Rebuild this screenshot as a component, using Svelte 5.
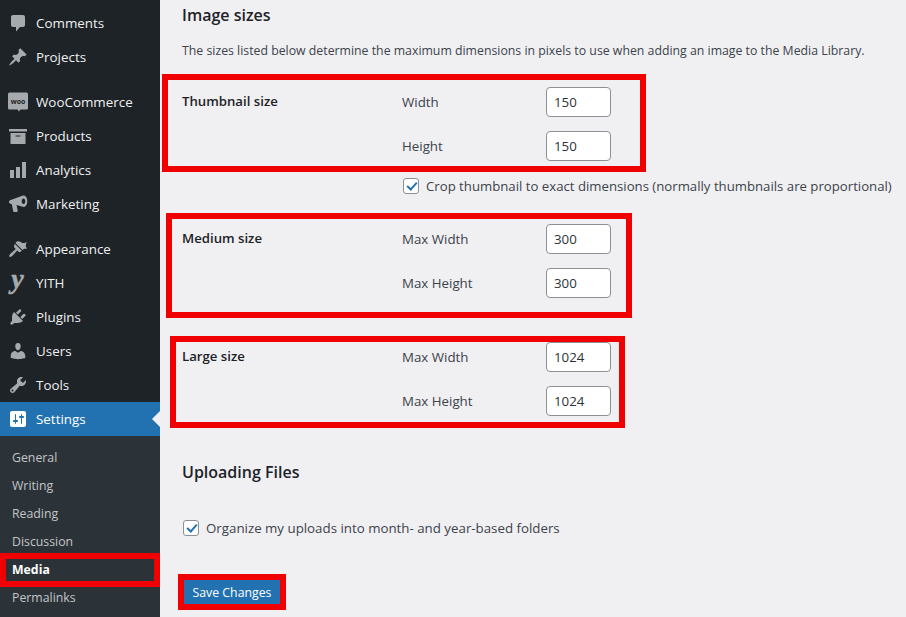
<script>
  const mainMenu = [
    { label: 'Comments', icon: 'comments', gap: false },
    { label: 'Projects', icon: 'pin', gap: false },
    { label: 'WooCommerce', icon: 'woo', gap: true },
    { label: 'Products', icon: 'archive', gap: false },
    { label: 'Analytics', icon: 'chart', gap: false },
    { label: 'Marketing', icon: 'megaphone', gap: false },
    { label: 'Appearance', icon: 'brush', gap: true },
    { label: 'YITH', icon: 'yith', gap: false },
    { label: 'Plugins', icon: 'plugin', gap: false },
    { label: 'Users', icon: 'user', gap: false },
    { label: 'Tools', icon: 'wrench', gap: false },
  ];
  const subMenu = ['General', 'Writing', 'Reading', 'Discussion', 'Media', 'Permalinks'];
  const sizeGroups = [
    { id: 'thumb', title: 'Thumbnail size', w: 'Width', h: 'Height', value: 150, crop: true },
    { id: 'medium', title: 'Medium size', w: 'Max Width', h: 'Max Height', value: 300, crop: false },
    { id: 'large', title: 'Large size', w: 'Max Width', h: 'Max Height', value: 1024, crop: false },
  ];
</script>

{#snippet icon(name)}
  <svg class="icon" viewBox="0 0 20 20" aria-hidden="true">
    {#if name === 'comments'}
      <path d="M5 2h10c1.100 0 2 .9 2 2v8c0 1.100-.9 2-2 2h-3l-4 4.500V14H5c-1.100 0-2-.9-2-2V4c0-1.100.9-2 2-2z" />
    {:else if name === 'pin'}
      <path d="M10.440 3.020l1.820-1.820 6.360 6.350-1.830 1.820c-1.050-.68-2.480-.57-3.410.36l-.75.75c-.92.93-1.040 2.350-.35 3.410l-1.830 1.820-2.410-2.410-2.800 2.790c-.42.42-3.380 2.710-3.800 2.290s1.860-3.390 2.280-3.810l2.790-2.790L4.100 9.360l1.830-1.820c1.050.69 2.480.57 3.400-.36l.75-.75c.93-.92 1.050-2.350.36-3.410z" />
    {:else if name === 'woo'}
      <path d="M1.500 .5h17A1.500 1.500 0 0 1 20 2v14a1.500 1.500 0 0 1-1.500 1.500H12.500L11 19.500 9.500 17.500h-8A1.500 1.500 0 0 1 0 16V2A1.500 1.500 0 0 1 1.500 .5z" />
      <text class="woo-text" x="10" y="11.500" text-anchor="middle">woo</text>
    {:else if name === 'archive'}
      <path fill-rule="evenodd" d="M19 3v2.500H1V3h18zM2.500 7h15v11h-15V7zm10 3.500V9.500h-5v1h5z" />
    {:else if name === 'chart'}
      <path d="M18 18V2h-4v16h4zm-6 0V7H8v11h4zm-6 0v-8H2v8h4z" />
    {:else if name === 'megaphone'}
      <path fill-rule="evenodd" d="M15.500 1.500c2.300 0 3.800 2.600 3.800 5.700s-1.500 5.800-3.800 5.800c-.6 0-1.100-.2-1.600-.5L8.500 11l1.200 5.500c.1.600-.3 1.500-1 1.500H6.200c-.6 0-.9-.5-1-1L3.800 10.300 2 9.500C.6 8.900.6 7 2 6.300l11-4c.7-.5 1.600-.8 2.500-.8zm0 3c-1 0-1.800 1.200-1.800 2.700s.8 2.800 1.800 2.800 1.800-1.300 1.800-2.800-.8-2.700-1.800-2.700z" />
    {:else if name === 'brush'}
      <path d="M14.480 11.060L7.410 3.990l1.500-1.500c.5-.56 2.300-.47 3.510.32 1.210.8 1.430 1.280 2.660 1.280 1.230 0 2.100-.4 3.600-.9-.5 1.500-.9 2.370-.9 3.600 0 1.230.48 1.450 1.280 2.660-1.200.3-2.400.1-2.900.4zM6.700 4.700l7.070 7.070-1.060 1.060c-.59.59-1.540.59-2.120 0l-1.410-1.410-4.950 5.650c-.59.59-2.120 1.180-2.710.59s0-2.120.59-2.710l5.650-4.950-1.410-1.410c-.59-.58-.59-1.530 0-2.120z" />
    {:else if name === 'yith'}
      <text class="yith-text" x="9.500" y="14.500" text-anchor="middle">y</text>
    {:else if name === 'plugin'}
      <path d="M13.110 4.360L9.870 7.600 8 5.730l3.240-3.240c.35-.34 1.050-.2 1.560.31.52.51.66 1.210.31 1.560zm-8 1.770l.91-1.120 9.010 9.010-1.190.84c-.71.71-2.630 1.160-3.820 1.160H6.140L4.900 17.260c-.59.59-1.540.59-2.120 0-.59-.58-.59-1.530 0-2.120l1.240-1.240v-3.880c0-1.130.33-3.050 1.090-3.890zm7.260 3.970l3.240-3.240c.34-.35 1.040-.21 1.550.31.51.51.66 1.210.31 1.560l-3.240 3.240z" />
    {:else if name === 'user'}
      <path d="M10 9.250c-2.270 0-2.730-3.440-2.730-3.440C7 4.020 7.820 2 9.970 2c2.160 0 2.980 2.020 2.710 3.810 0 0-.41 3.440-2.680 3.440zm0 2.570L12.720 10c2.390 0 4.520 2.330 4.520 4.530v2.490s-3.650 1.130-7.240 1.130c-3.650 0-7.240-1.130-7.240-1.130v-2.490c0-2.250 1.940-4.480 4.470-4.480z" />
    {:else if name === 'wrench'}
      <path fill-rule="evenodd" d="M16.680 9.770c-1.340 1.340-3.300 1.670-4.950.99l-5.410 6.520c-.99.99-2.590.99-3.570 0-.99-.98-.99-2.580 0-3.570l6.520-5.420c-.68-1.650-.35-3.610.99-4.950 1.280-1.280 3.120-1.620 4.720-1.060l-2.890 2.890 2.820 2.820 2.860-2.870c.53 1.580.18 3.390-1.090 4.650zM3.810 16.210c.4.39 1.030.39 1.420 0 .4-.4.4-1.030 0-1.430-.39-.39-1.020-.39-1.420 0-.39.4-.39 1.030 0 1.430z" />
    {:else if name === 'settings'}
      <path fill-rule="evenodd" d="M18 16V4c0-1.100-.9-2-2-2H4c-1.100 0-2 .9-2 2v12c0 1.100.9 2 2 2h12c1.100 0 2-.9 2-2zM8 11h1c.55 0 1 .45 1 1s-.45 1-1 1H8v1.500c0 .28-.22.5-.5.5s-.5-.22-.5-.5V13H6c-.55 0-1-.45-1-1s.45-1 1-1h1V5.500c0-.28.22-.5.5-.5s.5.22.5.5V11zm5-2h-1c-.55 0-1-.45-1-1s.45-1 1-1h1V5.500c0-.28.22-.5.5-.5s.5.22.5.5V7h1c.55 0 1 .45 1 1s-.45 1-1 1h-1v5.500c0 .28-.22.5-.5.5s-.5-.22-.5-.5V9z" />
    {/if}
  </svg>
{/snippet}

<div class="screen">
  <aside class="sidebar">
    <ul class="menu">
      {#each mainMenu as item}
        <li class="menu-item" class:gap={item.gap}>
          <span class="menu-icon">{@render icon(item.icon)}</span>
          <span>{item.label}</span>
        </li>
      {/each}
      <li class="menu-item current">
        <span class="menu-icon">{@render icon('settings')}</span>
        <span>Settings</span>
      </li>
    </ul>
    <ul class="submenu">
      {#each subMenu as item}
        <li class:active={item === 'Media'}>{item}</li>
      {/each}
    </ul>
  </aside>

  <main class="content">
    <h2 class="title-first">Image sizes</h2>
    <p class="intro">The sizes listed below determine the maximum dimensions in pixels to use when adding an image to the Media Library.</p>

    {#each sizeGroups as group}
      <section class="size-group {group.id}">
        <div class="group-title">{group.title}</div>
        <div class="group-fields">
          <label class="field">
            <span>{group.w}</span>
            <input type="text" value={group.value} />
          </label>
          <label class="field">
            <span>{group.h}</span>
            <input type="text" value={group.value} />
          </label>
          {#if group.crop}
            <label class="check">
              <input type="checkbox" checked />
              <span>Crop thumbnail to exact dimensions (normally thumbnails are proportional)</span>
            </label>
          {/if}
        </div>
      </section>
    {/each}

    <h2 class="title-upload">Uploading Files</h2>
    <label class="check upload-check">
      <input type="checkbox" checked />
      <span>Organize my uploads into month- and year-based folders</span>
    </label>
    <button class="save" type="button">Save Changes</button>
  </main>

  <div class="mark mark-thumb"></div>
  <div class="mark mark-medium"></div>
  <div class="mark mark-large"></div>
  <div class="mark mark-media"></div>
  <div class="mark mark-save"></div>
</div>

<style>
  :global(body) {
    margin: 0;
    background: #f0f0f3;
  }

  .screen {
    position: relative;
    display: flex;
    width: 906px;
    height: 617px;
    overflow: hidden;
    font-family: "Open Sans", "Noto Sans", sans-serif;
    font-size: 13.3px;
    color: #3c434a;
    background: #f0f0f3;
  }

  .sidebar {
    flex: 0 0 160px;
    background: #1d2327;
    padding-top: 6px;
  }

  .menu,
  .submenu {
    list-style: none;
    margin: 0;
    padding: 0;
  }

  .menu-item {
    display: flex;
    align-items: center;
    height: 34px;
    color: #f0f0f1;
    font-size: 13.4px;
    position: relative;
  }

  .menu-item.gap {
    margin-top: 11px;
  }

  .menu-icon {
    display: flex;
    justify-content: center;
    width: 36px;
    flex: none;
  }

  .icon {
    width: 20px;
    height: 20px;
    fill: #a7aaad;
    overflow: visible;
  }

  .woo-text {
    font-size: 7px;
    font-weight: 700;
    fill: #1d2327;
  }

  .yith-text {
    font-family: "Liberation Serif", serif;
    font-size: 28px;
    font-weight: 700;
    font-style: italic;
    stroke: #a7aaad;
    stroke-width: 0.5px;
  }

  .current {
    background: #2271b1;
    color: #fff;
  }

  .current .icon {
    fill: #fff;
  }

  .current::after {
    content: "";
    position: absolute;
    right: 0;
    top: 9px;
    border: 8px solid transparent;
    border-right-color: #f0f0f3;
    border-left-width: 0;
  }

  .submenu {
    background: #2c3338;
    padding: 8px 0 20px;
  }

  .submenu li {
    height: 28px;
    line-height: 28px;
    padding-left: 12px;
    font-size: 12.3px;
    color: #c3c4c7;
  }

  .submenu .active {
    color: #fff;
    font-weight: 700;
  }

  .content {
    flex: 1;
    padding: 0 0 0 22px;
    min-width: 0;
  }

  h2 {
    margin: 0;
    font-size: 16px;
    font-weight: 600;
    color: #1d2327;
    line-height: 22px;
  }

  .title-first {
    margin-top: 4px;
  }

  .intro {
    margin: 15px 0 0;
    font-size: 12.3px;
    line-height: 20px;
    white-space: nowrap;
  }

  .size-group {
    display: flex;
  }

  .thumb {
    padding-top: 26px;
  }

  .medium {
    padding-top: 28px;
  }

  .large {
    padding-top: 44px;
  }

  .group-title {
    flex: 0 0 220px;
    font-weight: 600;
    font-size: 13.2px;
    color: #1d2327;
    padding-top: 5px;
  }

  .group-fields {
    display: flex;
    flex-direction: column;
    gap: 14px;
  }

  .field {
    display: flex;
    align-items: center;
    height: 30px;
  }

  .field span {
    flex: 0 0 144px;
  }

  .field input {
    width: 65px;
    height: 30px;
    box-sizing: border-box;
    border: 1px solid #8c8f94;
    border-radius: 4px;
    padding: 0 7px;
    font: inherit;
    font-size: 13.3px;
    color: #2c3338;
    background: #fff;
  }

  .check {
    display: flex;
    align-items: center;
    gap: 7px;
    white-space: nowrap;
    margin-left: 1px;
  }

  .group-fields .check {
    margin-top: 1px;
    height: 20px;
    font-size: 13.2px;
  }

  .check input {
    appearance: none;
    width: 14px;
    height: 14px;
    margin: 0;
    box-sizing: content-box;
    border: 1px solid #8c8f94;
    border-radius: 3px;
    background: #fff;
    position: relative;
    flex: none;
  }

  .check input:checked::before {
    content: "";
    position: absolute;
    left: 4.500px;
    top: 1px;
    width: 4px;
    height: 8px;
    border: solid #2271b1;
    border-width: 0 2.500px 2.500px 0;
    transform: rotate(42deg);
  }

  .title-upload {
    margin-top: 45px;
  }

  .upload-check {
    margin-top: 36px;
  }

  .save {
    display: block;
    margin: 43px 0 0 2px;
    height: 24px;
    width: 96px;
    padding: 0;
    border: 0;
    background: #2271b1;
    color: #fff;
    font: inherit;
    font-size: 12.3px;
  }

  .mark {
    position: absolute;
    box-sizing: border-box;
    border: 6px solid #f00000;
    pointer-events: none;
  }

  .mark-thumb { left: 162px; top: 74px; width: 484px; height: 98px; }
  .mark-medium { left: 166px; top: 213px; width: 466px; height: 105px; }
  .mark-large { left: 170px; top: 336px; width: 455px; height: 92px; }
  .mark-media { left: 0; top: 553px; width: 160px; height: 34px; }
  .mark-save { left: 178px; top: 574px; width: 108px; height: 36px; }
</style>
